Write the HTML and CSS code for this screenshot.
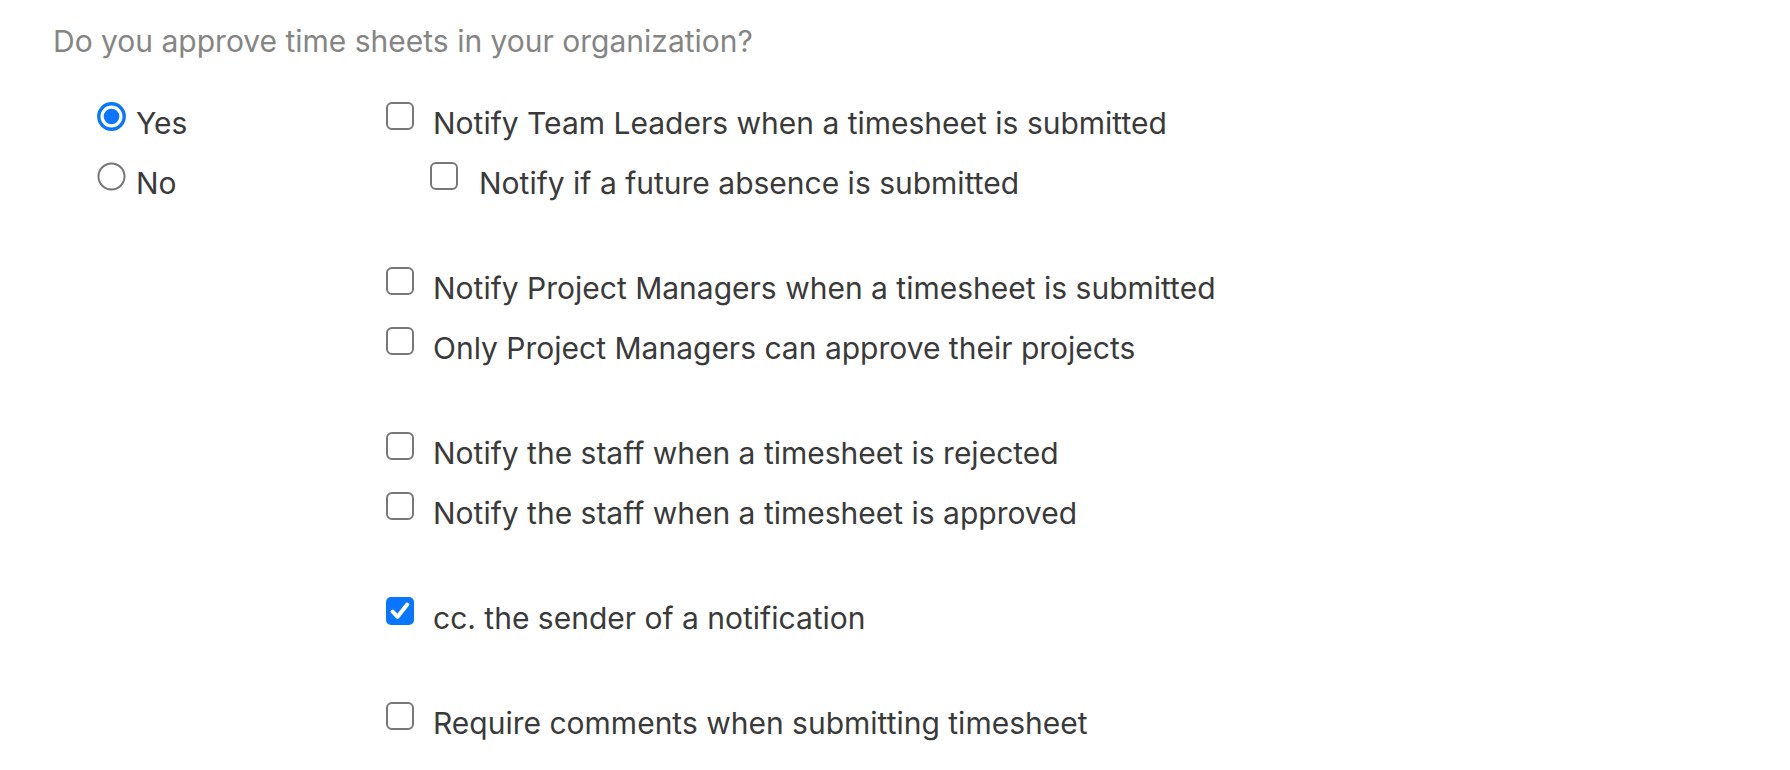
FILE: index.html
```html
<!DOCTYPE html>
<html lang="en">
<head>
<meta charset="utf-8">
<title>Timesheet approval settings</title>
<link rel="stylesheet" href="styles.css">
</head>
<body>
<div class="page">
  <p class="question">Do you approve time sheets in your organization?</p>
  <div class="settings">
    <div class="radios">
      <div class="row">
        <span class="radio on"><svg viewBox="0 0 29 29" width="29" height="29"><circle cx="14.5" cy="14.5" r="12.7" fill="#fff" stroke="#0a75ff" stroke-width="3.4"/><circle cx="14.5" cy="14.5" r="7.8" fill="#0a75ff"/></svg></span>
        <span class="radio-label">Yes</span>
      </div>
      <div class="row">
        <span class="radio"><svg viewBox="0 0 29 29" width="29" height="29"><circle cx="14.5" cy="14.5" r="13" fill="#fff" stroke="#767676" stroke-width="2"/></svg></span>
        <span class="radio-label">No</span>
      </div>
    </div>
    <div class="options">
      <div class="group">
        <div class="row"><span class="box"></span><span class="label">Notify Team Leaders when a timesheet is submitted</span></div>
        <div class="row nested"><span class="box"></span><span class="label">Notify if a future absence is submitted</span></div>
      </div>
      <div class="group">
        <div class="row"><span class="box"></span><span class="label">Notify Project Managers when a timesheet is submitted</span></div>
        <div class="row"><span class="box"></span><span class="label">Only Project Managers can approve their projects</span></div>
      </div>
      <div class="group">
        <div class="row"><span class="box"></span><span class="label">Notify the staff when a timesheet is rejected</span></div>
        <div class="row"><span class="box"></span><span class="label">Notify the staff when a timesheet is approved</span></div>
      </div>
      <div class="group">
        <div class="row"><span class="box checked"><svg viewBox="0 0 28 28" width="28" height="28"><path d="M6.6 14.6 L11.6 19.8 L21.2 7.6" fill="none" stroke="#fff" stroke-width="4" stroke-linecap="round" stroke-linejoin="round"/></svg></span><span class="label">cc. the sender of a notification</span></div>
      </div>
      <div class="group">
        <div class="row"><span class="box"></span><span class="label">Require comments when submitting timesheet</span></div>
      </div>
    </div>
  </div>
</div>
</body>
</html>
```

FILE: styles.css
```css
html, body {
  margin: 0;
  padding: 0;
  background: #ffffff;
}

body {
  font-family: Inter, "Liberation Sans", sans-serif;
  font-size: 30px;
  color: #3a3a3a;
}

.page {
  padding: 20px 0 0 53px;
}

.question {
  margin: 0;
  line-height: 42px;
  color: #858585;
}

.settings {
  display: flex;
  margin-top: 40px;
}

.radios {
  width: 289px;
  padding-left: 44px;
  flex: none;
}

.options {
  display: flex;
  flex-direction: column;
  gap: 45px;
}

.row {
  display: flex;
  align-items: flex-start;
  height: 60px;
}

.radio {
  width: 29px;
  height: 29px;
  flex: none;
  display: block;
}

.radio svg {
  display: block;
}

.radio-label {
  line-height: 42px;
  margin-left: 10px;
}

.box {
  box-sizing: border-box;
  width: 28px;
  height: 28px;
  flex: none;
  border: 2px solid #777777;
  border-radius: 6px;
  background: #fff;
}

.box.checked {
  border: none;
  background: #0a75ff;
  border-radius: 5px;
}

.box.checked svg {
  display: block;
}

.label {
  line-height: 42px;
  margin-left: 19px;
}

.nested {
  padding-left: 44px;
}

.nested .label {
  margin-left: 21px;
}
```
